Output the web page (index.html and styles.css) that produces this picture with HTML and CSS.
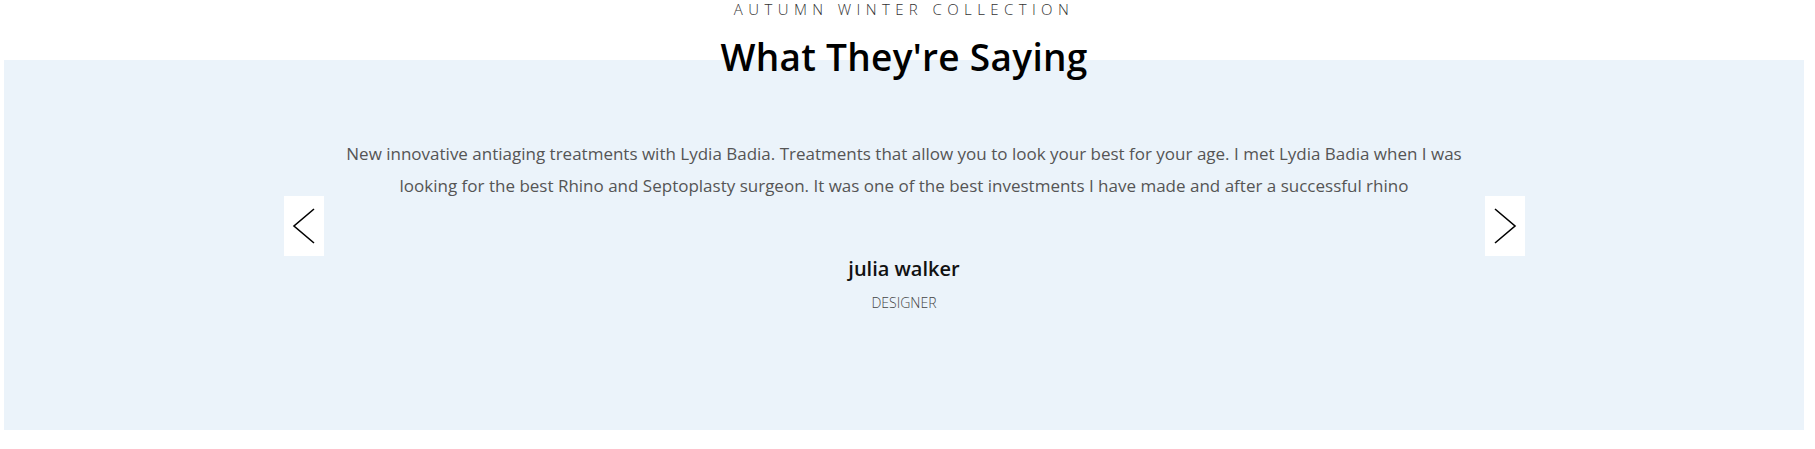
FILE: index.html
```html
<!DOCTYPE html>
<html lang="en">
<head>
<meta charset="utf-8">
<title>What They're Saying</title>
<link rel="stylesheet" href="styles.css">
</head>
<body>
<section class="testimonials">
  <header class="section-head">
    <p class="eyebrow">Autumn Winter Collection</p>
    <h2 class="title">What They're Saying</h2>
  </header>
  <div class="panel">
    <div class="slider">
      <button class="arrow" aria-label="Previous">
        <svg width="40" height="60" viewBox="0 0 40 60"><polyline points="30,13 10,30 30,47" fill="none" stroke="#000" stroke-width="1.6"/></svg>
      </button>
      <div class="slide">
        <p class="quote">New innovative antiaging treatments with Lydia Badia. Treatments that allow you to look your best for your age. I met Lydia Badia when I was looking for the best Rhino and Septoplasty surgeon. It was one of the best investments I have made and after a successful rhino</p>
        <h3 class="name">julia walker</h3>
        <p class="role">Designer</p>
      </div>
      <button class="arrow" aria-label="Next">
        <svg width="40" height="60" viewBox="0 0 40 60"><polyline points="10,13 30,30 10,47" fill="none" stroke="#000" stroke-width="1.6"/></svg>
      </button>
    </div>
  </div>
</section>
</body>
</html>
```
FILE: styles.css
```css
* { box-sizing: border-box; }
html, body { margin: 0; padding: 0; background: #fff; }
body { font-family: "Open Sans", "DejaVu Sans", sans-serif; }

.section-head {
  margin-left: 4px;
  width: 1800px;
  text-align: center;
  position: relative;
  z-index: 1;
  margin-bottom: -24px;
}
.eyebrow {
  margin: 0;
  font-size: 15px;
  line-height: 18px;
  font-weight: 300;
  letter-spacing: 5.4px;
  text-transform: uppercase;
  color: #333;
}
.title {
  margin: 12px 0 0;
  font-size: 37px;
  line-height: 54px;
  font-weight: 600;
  letter-spacing: 0.3px;
  color: #000;
}

.panel {
  margin-left: 4px;
  width: 1800px;
  height: 370px;
  background: #ebf3fa;
  padding-top: 78px;
}
.slider {
  width: 1241px;
  margin: 0 auto;
  display: flex;
  align-items: center;
  justify-content: space-between;
}
.arrow {
  flex: none;
  width: 40px;
  height: 60px;
  padding: 0;
  border: 0;
  background: #fff;
  display: flex;
  cursor: pointer;
}
.slide {
  flex: 1;
  text-align: center;
  padding: 0 4px;
}
.quote {
  margin: 0;
  font-size: 17px;
  line-height: 32px;
  color: #555;
}
.name {
  margin: 52px 0 0;
  font-size: 20px;
  line-height: 30px;
  font-weight: 600;
  color: #111;
}
.role {
  margin: 8px 0 0;
  font-size: 14px;
  line-height: 21px;
  font-weight: 300;
  text-transform: uppercase;
  color: #444;
}
```
